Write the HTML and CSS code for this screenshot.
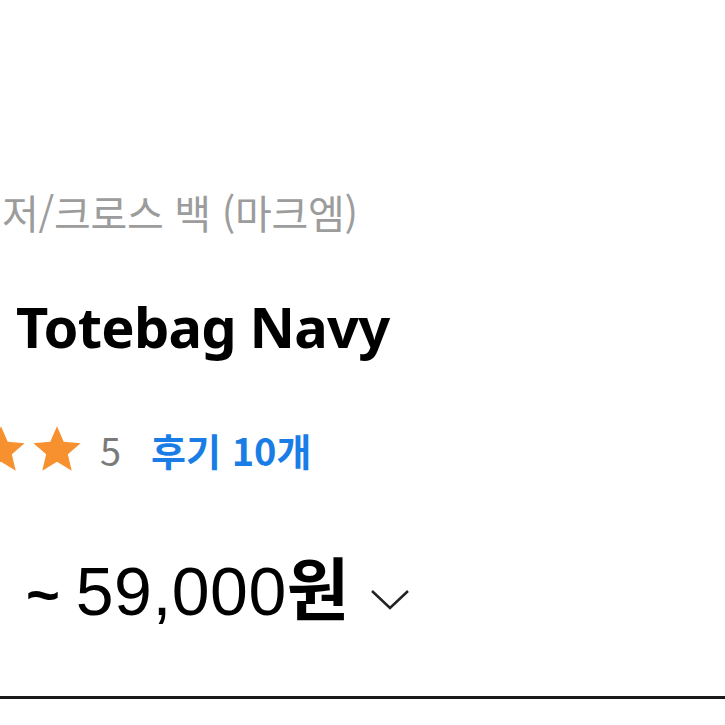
FILE: index.html
```html
<!DOCTYPE html>
<html lang="ko">

<head>
    <meta charset="UTF-8">
    <meta name="viewport" content="width=device-width, initial-scale=1.0">
    <title>Totebag Navy</title>
    <link rel="stylesheet" href="styles.css">
</head>

<body>
    <div class="product">
        <!-- 카테고리 -->
        <p class="category">저/크로스 백 (마크엠)</p>
        <!-- 상품명 -->
        <h1 class="title">Totebag Navy</h1>
        <!-- 별점 -->
        <div class="rating">
            <div class="stars">
                <svg viewBox="0 0 24 24"><path d="M12 1.5l3.1 7.2 7.8.6-5.9 5.1 1.8 7.6L12 17.9 5.2 22l1.8-7.6L1.1 9.3l7.8-.6z"/></svg>
                <svg viewBox="0 0 24 24"><path d="M12 1.5l3.1 7.2 7.8.6-5.9 5.1 1.8 7.6L12 17.9 5.2 22l1.8-7.6L1.1 9.3l7.8-.6z"/></svg>
            </div>
            <span class="score">5</span>
            <a class="review" href="#">후기 10개</a>
        </div>
        <!-- 가격 -->
        <div class="price">
            <span class="amount"><span class="tilde">~</span> 59,000<b>원</b></span>
            <svg class="arrow" viewBox="0 0 40 22"><polyline points="2,3 20,20 38,3"/></svg>
        </div>
    </div>
    <div class="divider"></div>
</body>

</html>
```

FILE: styles.css
```css
* {
    margin: 0;
    padding: 0;
}

body {
    width: 725px;
    height: 725px;
    overflow: hidden;
    background-color: #ffffff;
    font-family: "Noto Sans CJK KR", "Noto Sans", sans-serif;
}

.product {
    padding-top: 183px;
    height: 513px;
}

.category {
    font-size: 40px;
    line-height: 58px;
    color: #9c9c9c;
    padding-left: 2px;
    letter-spacing: -0.3px;
}

.title {
    margin-top: 50px;
    padding-left: 16px;
    font-family: "Noto Sans", sans-serif;
    font-weight: 700;
    font-size: 56px;
    line-height: 70px;
    color: #000000;
    letter-spacing: -0.8px;
}

.rating {
    display: flex;
    align-items: center;
    margin-top: 60px;
    height: 56px;
}

.stars {
    display: flex;
    margin-left: -26px;
}

.stars svg {
    width: 54px;
    height: 52px;
    margin-right: 2px;
    fill: #f7902f;
}

.score {
    margin-left: 14px;
    font-size: 38px;
    color: #7a7a7a;
}

.review {
    margin-left: 30px;
    font-size: 38px;
    font-weight: 700;
    color: #1a7de6;
    text-decoration: none;
}

.price {
    display: flex;
    align-items: center;
    margin-top: 64px;
    padding-left: 26px;
    height: 90px;
}

.amount {
    font-family: "Liberation Sans", "Noto Sans CJK KR", sans-serif;
    font-size: 68px;
    font-weight: 400;
    color: #000000;
    line-height: 90px;
    padding-top: 8px;
    letter-spacing: 0.5px;
    word-spacing: -4px;
}

.tilde {
    font-size: 58px;
    font-weight: 700;
}

.amount b {
    font-family: "Noto Sans CJK KR", sans-serif;
    font-weight: 700;
}

.arrow {
    width: 40px;
    height: 22px;
    margin-left: 20px;
    margin-top: 26px;
    fill: none;
    stroke: #222222;
    stroke-width: 2.5;
}

.divider {
    height: 3px;
    background-color: #1a1a1a;
}
```
